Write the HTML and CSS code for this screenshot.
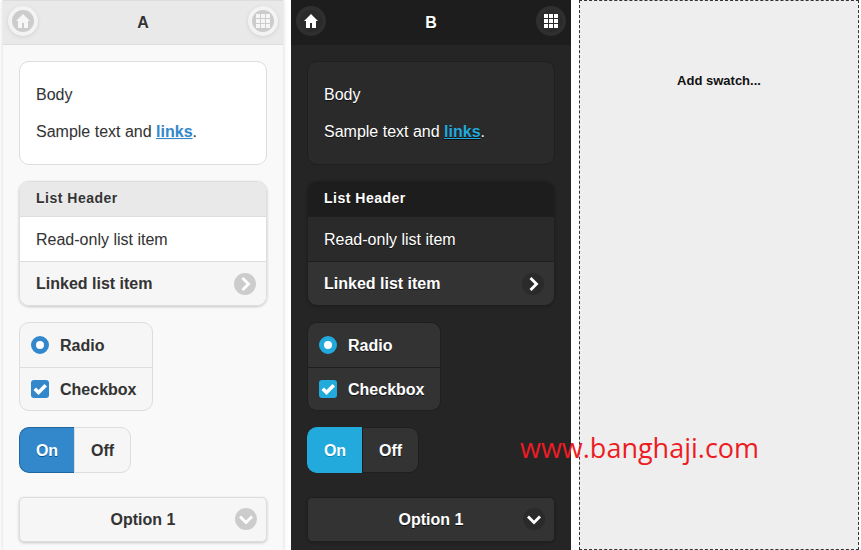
FILE: index.html
```html
<!DOCTYPE html>
<html lang="en">
<head>
    <meta charset="UTF-8">
    <meta name="viewport" content="width=device-width, initial-scale=1.0">
    <title>Theme swatches</title>
    <link rel="stylesheet" href="styles.css">
</head>
<body>
    <svg class="icon-defs" aria-hidden="true">
        <symbol id="i-home" viewBox="0 0 14 14"><path d="M7 0L0 7h2v7h4V9h2v5h4V7h2z"/></symbol>
        <symbol id="i-grid" viewBox="0 0 14 14"><path d="M0 0h4v4H0zM5 0h4v4H5zM10 0h4v4h-4zM0 5h4v4H0zM5 5h4v4H5zM10 5h4v4h-4zM0 10h4v4H0zM5 10h4v4H5zM10 10h4v4h-4z"/></symbol>
        <symbol id="i-right" viewBox="0 0 14 14"><path d="M3.5 2l2-2 7 7-7 7-2-2 5-5z"/></symbol>
        <symbol id="i-down" viewBox="0 0 14 14"><path d="M2 3.5l-2 2 7 7 7-7-2-2-5 5z"/></symbol>
        <symbol id="i-check" viewBox="0 0 14 14"><path d="M11.5 2L5.5 8 3 5.5l-2.500 2.500 5 5 8.500-8.500z"/></symbol>
    </svg>

    <section class="swatch swatch-a">
        <header class="bar">
            <span class="disc"><svg><use href="#i-home"/></svg></span>
            <h1>A</h1>
            <span class="disc"><svg><use href="#i-grid"/></svg></span>
        </header>
        <div class="content">
            <div class="card">
                <p>Body</p>
                <p>Sample text and <a href="#">links</a>.</p>
            </div>
            <ul class="list">
                <li class="list-head">List Header</li>
                <li class="list-plain">Read-only list item</li>
                <li class="list-link">Linked list item <span class="arrow"><svg><use href="#i-right"/></svg></span></li>
            </ul>
            <div class="group">
                <div class="group-row"><span class="radio"></span>Radio</div>
                <div class="group-row"><span class="check"><svg><use href="#i-check"/></svg></span>Checkbox</div>
            </div>
            <div class="toggle">
                <span class="toggle-on">On</span>
                <span class="toggle-off">Off</span>
            </div>
            <div class="select">Option 1 <span class="arrow"><svg><use href="#i-down"/></svg></span></div>
        </div>
    </section>

    <section class="swatch swatch-b">
        <header class="bar">
            <span class="disc"><svg><use href="#i-home"/></svg></span>
            <h1>B</h1>
            <span class="disc"><svg><use href="#i-grid"/></svg></span>
        </header>
        <div class="content">
            <div class="card">
                <p>Body</p>
                <p>Sample text and <a href="#">links</a>.</p>
            </div>
            <ul class="list">
                <li class="list-head">List Header</li>
                <li class="list-plain">Read-only list item</li>
                <li class="list-link">Linked list item <span class="arrow"><svg><use href="#i-right"/></svg></span></li>
            </ul>
            <div class="group">
                <div class="group-row"><span class="radio"></span>Radio</div>
                <div class="group-row"><span class="check"><svg><use href="#i-check"/></svg></span>Checkbox</div>
            </div>
            <div class="toggle">
                <span class="toggle-on">On</span>
                <span class="toggle-off">Off</span>
            </div>
            <div class="select">Option 1 <span class="arrow"><svg><use href="#i-down"/></svg></span></div>
        </div>
    </section>

    <section class="swatch-add">Add swatch...</section>

    <div class="watermark">www.banghaji.com</div>
</body>
</html>
```

FILE: styles.css
```css
* {
    box-sizing: border-box;
}
html, body {
    height: 100%;
}
body {
    margin: 0;
    padding-left: 2px;
    display: flex;
    gap: 7px;
    overflow: hidden;
    background: #fff;
    font-family: "Liberation Sans", Arial, sans-serif;
    font-size: 16px;
    line-height: 21px;
}
.icon-defs {
    display: none;
}

/* swatch columns */
.swatch {
    flex: none;
    height: 550px;
    overflow: hidden;
}
.swatch-a {
    width: 282px;
    border: 1px solid #ececec;
    border-top: 0;
    border-bottom: 0;
    box-shadow: 0 0 4px rgba(0, 0, 0, 0.12);
    background: #f9f9f9;
    color: #333;
    text-shadow: 0 1px 0 #f3f3f3;
}
.swatch-b {
    width: 280px;
    background: #252525;
    color: #fff;
    text-shadow: 0 1px 0 #111;
}
.swatch-add {
    flex: none;
    width: 280px;
    height: 550px;
    margin-left: 1px;
    padding-top: 69px;
    border: 1px dashed #333;
    background: #eee;
    color: #111;
    font-size: 13px;
    font-weight: bold;
    text-align: center;
}

/* header bar */
.bar {
    height: 45px;
    padding: 0 9px;
    display: flex;
    align-items: center;
    justify-content: space-between;
    border-top: 1px solid #ddd;
    border-bottom: 1px solid #ddd;
    background: #e9e9e9;
}
.swatch-b .bar {
    border-color: #1d1d1d;
    background: #1d1d1d;
}
.bar h1 {
    margin: 0;
    font-size: 16px;
    font-weight: bold;
}
.disc {
    width: 22px;
    height: 22px;
    margin-bottom: 3px;
    display: flex;
    align-items: center;
    justify-content: center;
    border-radius: 50%;
    background: #ccc;
    box-shadow: 0 0 0 4px #f3f3f3, 0 1px 4px 4px rgba(0, 0, 0, 0.1);
}
.swatch-b .disc {
    background: #2a2a2a;
    box-shadow: 0 0 0 4px #2f2f2f;
}
.disc svg {
    width: 14px;
    height: 14px;
    fill: #fff;
}
.swatch-a .disc svg {
    fill: #f6f6f6;
}

.content {
    padding: 16px;
    display: flex;
    flex-direction: column;
    align-items: flex-start;
}

/* body card */
.card {
    width: 248px;
    height: 104px;
    padding: 22px 16px;
    border: 1px solid #ddd;
    border-radius: 10px;
    background: #fff;
}
.swatch-b .card {
    border-color: #1f1f1f;
    background: #2a2a2a;
}
.card p {
    margin: 0 0 16px;
}
.card a {
    font-weight: bold;
    color: #38c;
}
.swatch-b .card a {
    color: #2ad;
}

/* list */
.list {
    width: 248px;
    margin: 16px 0 0;
    padding: 0;
    list-style: none;
    border: 1px solid #ddd;
    border-radius: 10px;
    overflow: hidden;
    box-shadow: 0 1px 3px rgba(0, 0, 0, 0.2);
}
.list li {
    padding: 0 16px;
    display: flex;
    align-items: center;
}
.list-head {
    height: 34px;
    background: #e9e9e9;
    font-size: 14px;
    font-weight: bold;
    letter-spacing: 0.5px;
    padding-bottom: 1px !important;
}
.list-plain {
    height: 45px;
    border-top: 1px solid #ddd;
    background: #fff;
}
.list-link {
    height: 44px;
    justify-content: space-between;
    border-top: 1px solid #ddd;
    background: #f6f6f6;
    font-weight: bold;
}
.swatch-b .list {
    border-color: #1f1f1f;
}
.swatch-b .list-head {
    background: #1d1d1d;
}
.swatch-b .list-plain {
    border-color: #1f1f1f;
    background: #2a2a2a;
}
.swatch-b .list-link {
    border-color: #1f1f1f;
    background: #333;
}

/* chevron disc, shared by list and select */
.arrow {
    width: 22px;
    height: 22px;
    margin-right: -6px;
    display: flex;
    align-items: center;
    justify-content: center;
    border-radius: 50%;
    background: #ccc;
}
.swatch-b .arrow {
    background: #2a2a2a;
}
.arrow svg {
    width: 14px;
    height: 14px;
    fill: #fff;
}

/* radio and checkbox group */
.group {
    width: 134px;
    margin-top: 16px;
    border: 1px solid #ddd;
    border-radius: 10px;
    overflow: hidden;
    background: #f6f6f6;
    font-weight: bold;
}
.group-row {
    height: 44px;
    padding-left: 11px;
    display: flex;
    align-items: center;
    gap: 11px;
}
.group-row + .group-row {
    height: 43px;
    border-top: 1px solid #ddd;
}
.swatch-b .group {
    width: 134px;
    border-color: #1f1f1f;
    background: #333;
}
.swatch-b .group-row + .group-row {
    border-color: #1f1f1f;
}
.radio {
    width: 18px;
    height: 18px;
    border: 5px solid #38c;
    border-radius: 50%;
    background: #fff;
}
.check {
    width: 18px;
    height: 18px;
    display: flex;
    align-items: center;
    justify-content: center;
    border-radius: 3px;
    background: #38c;
}
.check svg {
    width: 14px;
    height: 14px;
    fill: #fff;
}
.swatch-b .radio {
    border-color: #2ad;
}
.swatch-b .check {
    background: #2ad;
}

/* on/off */
.toggle {
    margin-top: 16px;
    height: 46px;
    display: flex;
    font-weight: bold;
}
.toggle span {
    display: flex;
    align-items: center;
    justify-content: center;
}
.toggle-on {
    width: 55px;
    border: 1px solid #1f67a0;
    border-right: 0;
    border-radius: 10px 0 0 10px;
    background: #38c;
    color: #fff;
    text-shadow: 0 1px 0 #059;
}
.toggle-off {
    width: 57px;
    border: 1px solid #ddd;
    border-radius: 0 10px 10px 0;
    background: #f6f6f6;
}
.swatch-b .toggle-on {
    border-color: #2ad;
    background: #2ad;
    text-shadow: 0 1px 0 #08b;
}
.swatch-b .toggle-off {
    border-color: #1f1f1f;
    background: #333;
}

/* select */
.select {
    position: relative;
    width: 248px;
    height: 45px;
    margin-top: 24px;
    display: flex;
    align-items: center;
    justify-content: center;
    border: 1px solid #ddd;
    border-radius: 5px;
    background: #f6f6f6;
    box-shadow: 0 1px 3px rgba(0, 0, 0, 0.2);
    font-weight: bold;
}
.select .arrow {
    position: absolute;
    right: 9px;
    top: 10px;
    margin: 0;
}
.swatch-b .select {
    border-color: #1f1f1f;
    background: #333;
}

.watermark {
    position: absolute;
    left: 520px;
    top: 429px;
    color: #ed1c24;
    font-family: "Open Sans", sans-serif;
    font-size: 27px;
    line-height: 38px;
}
```
